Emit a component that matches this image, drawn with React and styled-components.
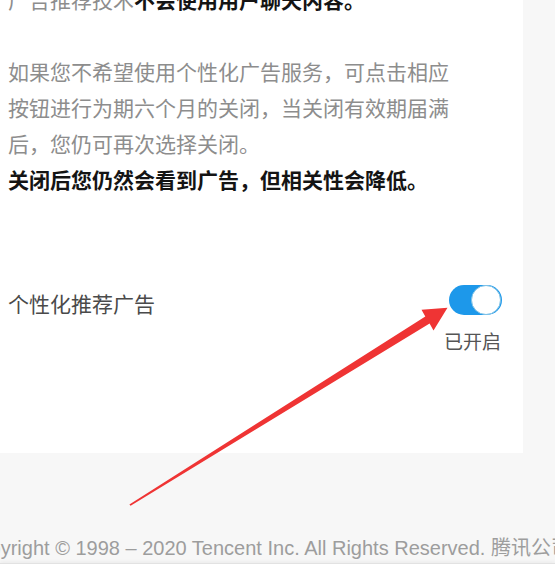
import React from "react";
import styled, { createGlobalStyle } from "styled-components";

const GlobalStyle = createGlobalStyle`
  html, body { margin: 0; padding: 0; background: #ffffff; }
  body { overflow: hidden; }
`;

const Page = styled.div`
  position: relative;
  width: 555px;
  height: 580px;
  overflow: hidden;
  display: flex;
  flex-direction: column;
  background: #f7f7f7;
  font-family: "Noto Sans CJK SC", "Noto Sans", sans-serif;
`;

const Card = styled.section`
  box-sizing: border-box;
  width: 523px;
  height: 472px;
  margin-top: -19px;
  padding: 0 21px 0 8px;
  background: #ffffff;
  flex: none;
`;

const Paragraph = styled.p`
  margin: 0 0 ${(p) => (p.$last ? 0 : 36)}px;
  width: 452px;
  font-size: 21px;
  line-height: 36px;
  color: #8d8d8d;
`;

const Strong = styled.strong`
  font-weight: 700;
  color: #141414;
`;

const SettingRow = styled.div`
  display: flex;
  justify-content: space-between;
  align-items: flex-start;
  margin-top: 88px;
`;

const SettingLabel = styled.span`
  padding-top: 0;
  font-size: 21px;
  line-height: 36px;
  color: #4a4a4a;
`;

const SwitchColumn = styled.div`
  display: flex;
  flex-direction: column;
  align-items: center;
  gap: 14px;
`;

const Switch = styled.span`
  position: relative;
  display: block;
  width: 53px;
  height: 30px;
  border-radius: 15px;
  background: ${(p) => (p.$on ? "#1d98ea" : "#d8d8d8")};

  &::after {
    content: "";
    position: absolute;
    top: 0;
    ${(p) => (p.$on ? "right: 1px;" : "left: 1px;")}
    box-sizing: border-box;
    width: 30px;
    height: 30px;
    border-radius: 50%;
    background: #ffffff;
    border: 1.5px solid #7fc2e6;
  }
`;

const SwitchState = styled.span`
  font-size: 19px;
  line-height: 24px;
  color: #555555;
  margin-left: -6px;
`;

const FooterBand = styled.footer`
  flex: 1;
  display: flex;
  align-items: flex-end;
  padding-bottom: 3px;
  overflow: hidden;
`;

const FooterText = styled.span`
  margin-left: -36px;
  white-space: nowrap;
  font-family: "Liberation Sans", "Noto Sans CJK SC", sans-serif;
  font-size: 20px;
  line-height: 24px;
  color: #9d9d9d;
`;

const BottomStrip = styled.div`
  flex: none;
  height: 16px;
  background: #ffffff;
  border-top: 1px solid #e2e2e2;
  box-shadow: 0 -2px 3px rgba(0, 0, 0, 0.04);
`;

const ArrowLayer = styled.svg`
  position: absolute;
  top: 0;
  left: 0;
  width: 555px;
  height: 580px;
  pointer-events: none;
`;

export default function App() {
  return (
    <>
      <GlobalStyle />
      <Page>
        <Card>
          <Paragraph>
            广告推荐技术<Strong>不会使用用户聊天内容。</Strong>
          </Paragraph>
          <Paragraph $last>
            如果您不希望使用个性化广告服务，可点击相应按钮进行为期六个月的关闭，当关闭有效期届满后，您仍可再次选择关闭。
            <br />
            <Strong>关闭后您仍然会看到广告，但相关性会降低。</Strong>
          </Paragraph>
          <SettingRow>
            <SettingLabel>个性化推荐广告</SettingLabel>
            <SwitchColumn>
              <Switch $on role="switch" aria-checked="true" />
              <SwitchState>已开启</SwitchState>
            </SwitchColumn>
          </SettingRow>
        </Card>
        <FooterBand>
          <FooterText>
            Copyright © 1998 – 2020 Tencent Inc. All Rights Reserved. 腾讯公司 版权所有
          </FooterText>
        </FooterBand>
        <BottomStrip />
        <ArrowLayer viewBox="0 0 555 580">
          <polygon
            points="129.4,504.4 425.3,316.6 421.5,309.8 447.5,307.8 433.5,330.5 429.6,323.4 130.6,505.8"
            fill="#ef3434"
            strokeLinejoin="round"
          />
        </ArrowLayer>
      </Page>
    </>
  );
}
